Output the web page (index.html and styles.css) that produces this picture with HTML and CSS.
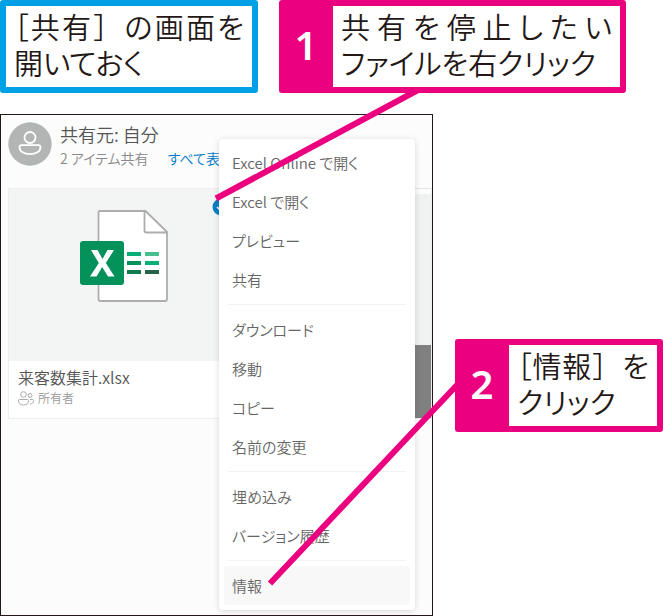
FILE: index.html
```html
<!DOCTYPE html>
<html lang="ja">
<head>
<meta charset="utf-8">
<title>ファイルの共有を停止する</title>
<link rel="stylesheet" href="styles.css">
</head>
<body>
<main class="guide">
  <div class="steps">
    <p class="note"><span class="spread">［共有<span class="full">］</span>の画面を</span>開いておく</p>
    <section class="callout">
      <span class="number">1</span>
      <p class="callout-text"><span class="spread">共有を停止したい</span>ファイルを右クリック</p>
    </section>
  </div>
  <div class="stage">
    <section class="app">
      <header class="owner">
        <svg class="avatar" viewBox="0 0 44 44" aria-hidden="true">
          <circle cx="22" cy="22" r="21.7" fill="#b3b5b4"/>
          <g fill="none" stroke="#fff" stroke-width="1.8">
            <circle cx="22" cy="15.500" r="5.500"/>
            <path d="M13.500 23.200h17c1.200 0 2 .8 2 2 0 4.300-4.700 7-10.500 7s-10.500-2.700-10.500-7c0-1.200.8-2 2-2z"/>
          </g>
        </svg>
        <div>
          <h1 class="owner-name">共有元: 自分</h1>
          <p class="owner-info">2 アイテム共有 <a class="all" href="#">すべて表示</a></p>
        </div>
      </header>
      <div class="files">
        <article class="file">
          <div class="preview">
            <svg class="excel" viewBox="0 0 88 92" aria-hidden="true">
              <path d="M19.500 1h46L87 22v67q0 2-2 2H20.500q-2 0-2-2V2q0-1 1-1z" fill="#fff" stroke="#adadad" stroke-width="1.800"/>
              <path d="M64.500 1v19.500q0 2 2 2H87" fill="none" stroke="#adadad" stroke-width="1.800"/>
              <rect x="0" y="31" width="44" height="44" rx="3" fill="#04915a"/>
              <path d="M11 40h6.500l5 9 5-9H34l-8.200 13L34.500 66.500H28l-5.800-9.500-5.700 9.500H10L18.800 53z" fill="#fff"/>
              <path d="M47 42h14v4H47z" fill="#08ae78"/><path d="M65 42h14v4H65z" fill="#48bd8e"/>
              <path d="M47 51h14v4H47z" fill="#04915a"/><path d="M65 51h14v4H65z" fill="#08ae78"/>
              <path d="M47 60h14v4H47z" fill="#107a4e"/><path d="M65 60h14v4H65z" fill="#276148"/>
            </svg>
            <svg class="check" viewBox="0 0 18 18" aria-hidden="true">
              <circle cx="9" cy="9" r="8.500" fill="#0580c6"/>
              <path d="M5 9l3 3 5-6" fill="none" stroke="#fff" stroke-width="1.500"/>
            </svg>
          </div>
          <div class="file-info">
            <h2 class="file-name">来客数集計.xlsx</h2>
            <p class="role">
              <svg class="people" viewBox="0 0 16 15" fill="none" stroke="#a9a9a9" aria-hidden="true">
                <circle cx="5.500" cy="3.500" r="2.800"/><circle cx="12" cy="4.500" r="2"/>
                <path d="M1.500 8.500h8q1 0 1 1c0 3-2 4.500-5 4.500s-5-1.500-5-4.500q0-1 1-1zM12 8.500h2.500q1 0 1 1c0 2.500-1.500 3.500-3.500 3.500"/>
              </svg>所有者</p>
          </div>
        </article>
        <article class="file file-next">
          <div class="preview"></div>
          <div class="file-info"></div>
        </article>
      </div>
      <nav class="menu">
        <button type="button">Excel Online で開く</button>
        <button type="button">Excel で開く</button>
        <button type="button">プレビュー</button>
        <button type="button">共有</button>
        <hr>
        <button type="button">ダウンロード</button>
        <button type="button">移動</button>
        <button type="button">コピー</button>
        <button type="button">名前の変更</button>
        <hr>
        <button type="button">埋め込み</button>
        <button type="button">バージョン履歴</button>
        <hr>
        <button type="button" class="active">情報</button>
      </nav>
    </section>
    <section class="callout callout-second">
      <span class="number">2</span>
      <p class="callout-text"><span class="spread">［情報<span class="full">］</span>を</span>クリック</p>
    </section>
  </div>
  <svg class="leaders" viewBox="0 0 663 616" preserveAspectRatio="none" aria-hidden="true">
    <path d="M216 198.500L418 90M270 583.500L457 385" stroke="#eb007f" stroke-width="6" fill="none"/>
  </svg>
</main>
</body>
</html>
```
FILE: styles.css
```css
* { box-sizing: border-box; }

body {
  margin: 0;
  background: #fff;
  color: #231815;
  font-family: "Noto Sans CJK JP", sans-serif;
  font-feature-settings: "palt";
}

h1, h2, p { margin: 0; font-weight: 350; }

.guide {
  position: relative;
  display: flex;
  flex-direction: column;
  gap: 21px;
  min-height: 100vh;
}

.steps {
  display: grid;
  grid-template-columns: 258fr 347fr;
  gap: 21px;
  padding-right: 37px;
}

.note {
  padding: 2px 8px 7px;
  border: 6px solid #00a0e6;
  border-radius: 3px;
  font-size: 29px;
  line-height: 36px;
}

.callout {
  display: flex;
  border: 6px solid #eb007f;
  border-radius: 3px;
  background: #fff;
}

.number {
  display: flex;
  flex: 0 0 48px;
  align-items: center;
  justify-content: center;
  padding: 0 6px 4px 0;
  background: #eb007f;
  color: #fff;
  font: 600 40px/48px "Noto Sans", sans-serif;
}

.callout-text {
  flex: 1;
  padding: 2px 8px 7px;
  font-size: 29px;
  line-height: 36px;
}

.spread { display: flow-root; text-align: justify; text-align-last: justify; }
.full { font-feature-settings: normal; }

.stage {
  display: grid;
  flex: 1;
  grid-template-columns: 433fr 208fr;
  gap: 22px;
}

.app {
  position: relative;
  min-height: 502px;
  padding: 7px 0 0 7px;
  overflow: hidden;
  border: 1px solid #231815;
  background: #fcfcfc;
}

.callout-second { align-self: start; margin-top: 225px; }

.owner { display: flex; gap: 8px; height: 66px; }
.avatar { width: 44px; height: 44px; }
.owner-name { color: #555; font-size: 18px; line-height: 24px; }
.owner-info { color: #888; font-size: 14px; line-height: 24px; }
.all { margin-left: 16px; color: #0078c8; text-decoration: none; }

.files { display: grid; grid-template-columns: 220fr 189fr; gap: 16px; }
.file { border: 1px solid #eee; background: #fff; }
.preview {
  position: relative;
  display: flex;
  justify-content: center;
  height: 172px;
  padding: 21px 0 0 12px;
  background: #f3f5f5;
}
.excel { width: 88px; height: 92px; }
.check { position: absolute; top: 9px; right: -4px; width: 18px; height: 18px; }
.file-info { height: 57px; padding: 4px 9px; }
.file-name { color: #555; font-size: 16px; line-height: 24px; }
.role { display: flex; align-items: center; gap: 4px; color: #999; font-size: 12px; line-height: 18px; }
.people { width: 16px; height: 15px; }

.file-next { border-top: 1px solid #e4e5e5; }
.file-next .preview { height: 156px; border-top: 5px solid #fcfcfc; background: #f0f2f2; }
.file-next .file-info { height: 73px; background: #808080; }

.menu {
  position: absolute;
  top: 24px;
  right: 17px;
  width: 196px;
  padding: 4px 5px 5px;
  border-radius: 4px;
  background: #fff;
  box-shadow: 0 1px 6px rgba(0, 0, 0, 0.15);
}

.menu button {
  display: block;
  width: 100%;
  height: 39px;
  padding: 0 8px;
  border: 0;
  border-radius: 3px;
  background: none;
  color: #666;
  font: 350 15px/24px "Noto Sans CJK JP", sans-serif;
  font-feature-settings: "palt";
  text-align: left;
  white-space: nowrap;
}

.menu .active { background: #f8f8f8; }

.menu hr { height: 1px; margin: 5px 4px; border: 0; background: #f2f2f2; }

.leaders {
  position: absolute;
  inset: 0;
  width: 100%;
  height: 100%;
  pointer-events: none;
}
```
